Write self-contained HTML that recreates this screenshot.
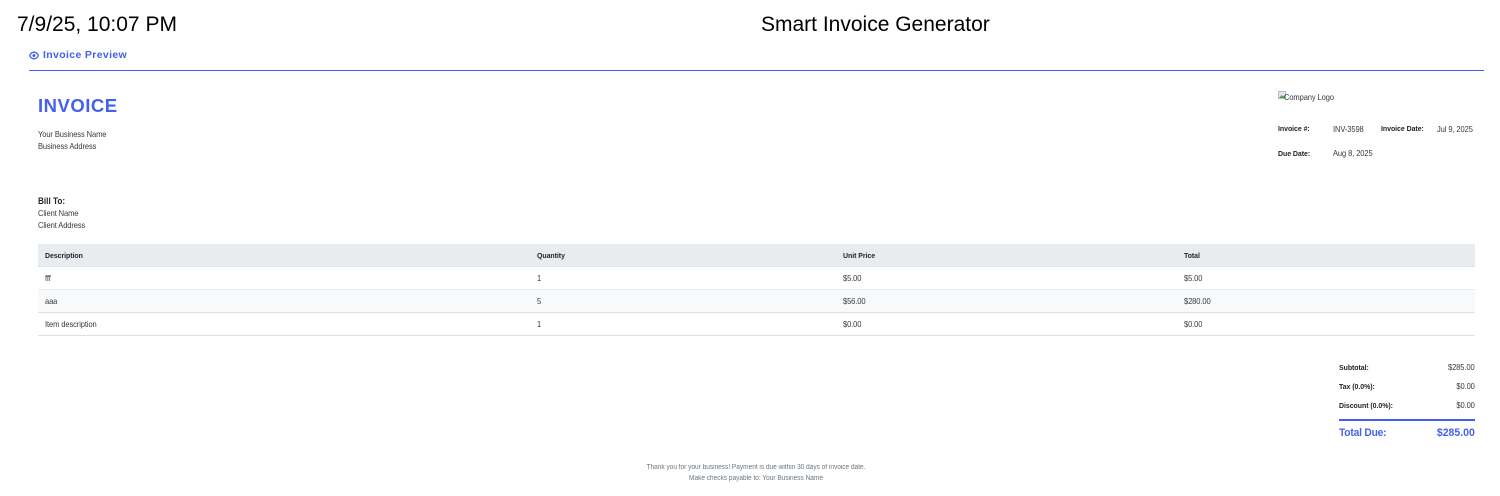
<!DOCTYPE html>
<html lang="en">
<head>
<meta charset="utf-8">
<title>Smart Invoice Generator</title>
<style>
html,body{margin:0;padding:0;background:#fff;}
body{width:1500px;height:496px;position:relative;overflow:hidden;font-family:"Liberation Sans",Arial,sans-serif;color:#333;}
.t{position:absolute;white-space:nowrap;font-size:8.100px;letter-spacing:-.1px;line-height:12px;color:#343a40;transform:scaleX(.93);transform-origin:0 50%;}
.b{font-weight:bold;color:#212529;font-size:7.500px;letter-spacing:-.05px;}
.r{text-align:right;transform-origin:100% 50%;}
.h{font-size:21px;line-height:28px;color:#000;letter-spacing:0;transform:none;}
.n{transform:none;}
.f{font-size:7px;letter-spacing:0;color:#6c757d;left:0;width:1512px;text-align:center;transform-origin:50% 50%;}
.bar{position:absolute;}
</style>
</head>
<body>
<div class="t h" style="left:17px;top:11px;">7/9/25, 10:07 PM</div>
<div class="t h" style="left:761px;top:11px;">Smart Invoice Generator</div>

<svg style="position:absolute;left:29px;top:51px" width="10" height="9" viewBox="0 0 10 9"><path d="M.6 4.500C1.600 2.400 3.100 1.200 5 1.200s3.400 1.200 4.400 3.300C8.400 6.600 6.900 7.800 5 7.800S1.600 6.600.6 4.500Z" fill="none" stroke="#4361ee" stroke-width="1.300"/><circle cx="5" cy="4.500" r="1.500" fill="#4361ee"/></svg>
<div class="t n" style="left:43px;top:47px;font-size:10.500px;line-height:16px;font-weight:bold;color:#4361ee;letter-spacing:.35px;">Invoice Preview</div>
<div class="bar" style="left:29px;top:70px;width:1455px;height:1px;background:#4361ee;"></div>

<div class="t n" style="left:38px;top:94px;font-size:18.500px;line-height:24px;font-weight:bold;color:#4361ee;letter-spacing:.5px;">INVOICE</div>
<div class="t" style="left:38px;top:129px;">Your Business Name</div>
<div class="t" style="left:38px;top:141px;">Business Address</div>

<svg style="position:absolute;left:1278px;top:91px" width="8" height="8" viewBox="0 0 8 8"><rect x=".5" y=".5" width="7" height="7" fill="#dfe6f5" stroke="#b5bcc8"/><path d="M1 7l2.500-3L5 5.500 7 4v3z" fill="#5da04a"/></svg>
<div class="t" style="left:1284px;top:92px;">Company Logo</div>

<div class="t b" style="left:1278px;top:123px;">Invoice #:</div>
<div class="t" style="left:1333px;top:124px;">INV-3598</div>
<div class="t b" style="left:1381px;top:123px;">Invoice Date:</div>
<div class="t" style="left:1437px;top:124px;">Jul 9, 2025</div>
<div class="t b" style="left:1278px;top:148px;">Due Date:</div>
<div class="t" style="left:1333px;top:148px;">Aug 8, 2025</div>

<div class="t b" style="left:38px;top:195px;font-size:8.800px;letter-spacing:0;">Bill To:</div>
<div class="t" style="left:38px;top:208px;">Client Name</div>
<div class="t" style="left:38px;top:220px;">Client Address</div>

<div class="bar" style="left:38px;top:244px;width:1437px;height:22px;background:#e9ecef;"></div>
<div class="bar" style="left:38px;top:266px;width:1437px;height:1px;background:#dee2e6;"></div>
<div class="bar" style="left:38px;top:290px;width:1437px;height:22px;background:#f8f9fa;"></div>
<div class="bar" style="left:38px;top:289px;width:1437px;height:1px;background:#e9ecef;"></div>
<div class="bar" style="left:38px;top:312px;width:1437px;height:1px;background:#dee2e6;"></div>
<div class="bar" style="left:38px;top:335px;width:1437px;height:1px;background:#dee2e6;"></div>

<div class="t b" style="left:45px;top:250px;">Description</div>
<div class="t b" style="left:537px;top:250px;">Quantity</div>
<div class="t b" style="left:843px;top:250px;">Unit Price</div>
<div class="t b" style="left:1184px;top:250px;">Total</div>

<div class="t" style="left:45px;top:273px;">fff</div>
<div class="t" style="left:537px;top:273px;">1</div>
<div class="t" style="left:843px;top:273px;">$5.00</div>
<div class="t" style="left:1184px;top:273px;">$5.00</div>

<div class="t" style="left:45px;top:296px;">aaa</div>
<div class="t" style="left:537px;top:296px;">5</div>
<div class="t" style="left:843px;top:296px;">$56.00</div>
<div class="t" style="left:1184px;top:296px;">$280.00</div>

<div class="t" style="left:45px;top:319px;">Item description</div>
<div class="t" style="left:537px;top:319px;">1</div>
<div class="t" style="left:843px;top:319px;">$0.00</div>
<div class="t" style="left:1184px;top:319px;">$0.00</div>

<div class="t b" style="left:1339px;top:362px;">Subtotal:</div>
<div class="t r" style="right:25px;top:362px;">$285.00</div>
<div class="t b" style="left:1339px;top:381px;">Tax (0.0%):</div>
<div class="t r" style="right:25px;top:381px;">$0.00</div>
<div class="t b" style="left:1339px;top:400px;">Discount (0.0%):</div>
<div class="t r" style="right:25px;top:400px;">$0.00</div>
<div class="bar" style="left:1339px;top:419px;width:136px;height:2px;background:#4361ee;"></div>
<div class="t" style="left:1339px;top:426px;font-size:11px;letter-spacing:-.2px;line-height:14px;font-weight:bold;color:#4361ee;">Total Due:</div>
<div class="t r" style="right:25px;top:426px;font-size:11.300px;letter-spacing:0;line-height:14px;font-weight:bold;color:#4361ee;">$285.00</div>

<div class="t f" style="top:462px;">Thank you for your business! Payment is due within 30 days of invoice date.</div>
<div class="t f" style="top:473px;">Make checks payable to: Your Business Name</div>
</body>
</html>
